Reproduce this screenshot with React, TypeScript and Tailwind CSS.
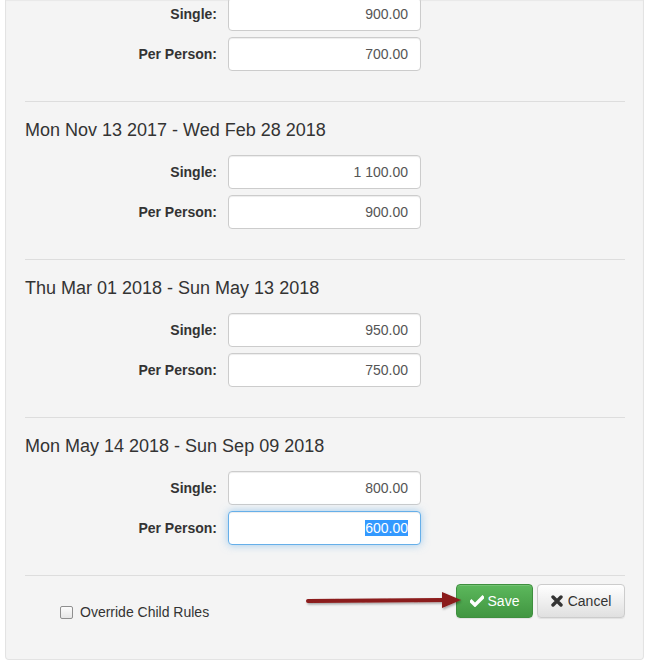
import React from "react";

const font = { fontFamily: '"Liberation Sans", Arial, Helvetica, sans-serif' };

function Field({ label, value, focused }: { label: string; value: string; focused?: boolean }) {
  return (
    <div className="flex items-center">
      <div className="w-[192px] text-right text-[14px] font-bold text-[#333]">{label}</div>
      <div
        className={
          "ml-[11px] h-[34px] w-[193px] rounded-[4px] border bg-white px-[12px] text-right text-[14px] leading-[32px] text-[#555] " +
          (focused
            ? "border-[#66afe9] shadow-[inset_0_1px_1px_rgba(0,0,0,0.075),0_0_8px_rgba(102,175,233,0.6)]"
            : "border-[#ccc] shadow-[inset_0_1px_1px_rgba(0,0,0,0.075)]")
        }
      >
        {focused ? <span className="bg-[#3399ff] text-white">{value}</span> : value}
      </div>
    </div>
  );
}

function Section({ title, single, person, focused }: { title: string; single: string; person: string; focused?: boolean }) {
  return (
    <div className="border-t border-[#dddddd]">
      <div className="pb-[15px] pt-[18px] text-[18px] leading-[20px] text-[#333]">{title}</div>
      <div className="flex flex-col gap-[6px]">
        <Field label="Single:" value={single} />
        <Field label="Per Person:" value={person} focused={focused} />
      </div>
      <div className="h-[30px]" />
    </div>
  );
}

export default function App() {
  return (
    <div className="min-h-[665px] bg-white" style={font}>
      <div className="ml-[5px] w-[639px] overflow-hidden rounded-b-[4px] border border-t-0 border-[#e3e3e3] bg-[#f4f4f4] pb-[37px] pl-[19px] pr-[18px] shadow-[inset_0_1px_1px_rgba(0,0,0,0.05),0_1px_0_rgba(255,255,255,0.1)]">
        <div className="-mt-[3px]">
          <div className="flex flex-col gap-[6px]">
            <Field label="Single:" value="900.00" />
            <Field label="Per Person:" value="700.00" />
          </div>
          <div className="h-[30px]" />
        </div>
        <Section title="Mon Nov 13 2017 - Wed Feb 28 2018" single="1 100.00" person="900.00" />
        <Section title="Thu Mar 01 2018 - Sun May 13 2018" single="950.00" person="750.00" />
        <Section title="Mon May 14 2018 - Sun Sep 09 2018" single="800.00" person="600.00" focused />
        <div className="relative flex items-start justify-between border-t border-[#dddddd] pt-[8px]">
          <label className="ml-[35px] mt-[18px] flex items-center gap-[7px] text-[14px] leading-[20px] text-[#333]">
            <span className="inline-block h-[13px] w-[13px] rounded-[2px] border border-[#8f8f8f] bg-gradient-to-b from-[#fcfcfc] to-[#e6e6e6]" />
            <span>Override Child Rules</span>
          </label>
          <div className="flex gap-[4px]">
            <button className="flex h-[34px] w-[77px] items-center justify-center gap-[4px] rounded-[4px] border border-[#3e8f3e] bg-gradient-to-b from-[#5cb85c] to-[#419641] text-[14px] text-white shadow-[inset_0_1px_0_rgba(255,255,255,0.15),0_1px_1px_rgba(0,0,0,0.075)]">
              <svg width="14" height="12" viewBox="0 0 14 12">
                <path d="M1.5 6.5 L5 10 L12.5 2.5" fill="none" stroke="white" strokeWidth="3.4" strokeLinecap="square" />
              </svg>
              <span>Save</span>
            </button>
            <button className="flex h-[34px] w-[88px] items-center justify-center gap-[5px] rounded-[4px] border border-[#ccc] bg-gradient-to-b from-white to-[#e0e0e0] text-[14px] text-[#333] shadow-[inset_0_1px_0_rgba(255,255,255,0.15),0_1px_1px_rgba(0,0,0,0.075)]">
              <svg width="12" height="12" viewBox="0 0 12 12">
                <path d="M2 2 L10 10 M10 2 L2 10" fill="none" stroke="#333" strokeWidth="3.4" strokeLinecap="round" />
              </svg>
              <span>Cancel</span>
            </button>
          </div>
          <svg className="absolute left-[280px] top-[14px]" width="160" height="22" viewBox="0 0 160 22">
            <defs>
              <filter id="sh" x="-10%" y="-50%" width="120%" height="200%">
                <feDropShadow dx="1" dy="1.5" stdDeviation="1" floodColor="#000" floodOpacity="0.35" />
              </filter>
            </defs>
            <g filter="url(#sh)">
              <path d="M3 11 L140 10" stroke="#8b1a1a" strokeWidth="4" strokeLinecap="round" />
              <path d="M137 2 L156 10 L137 18 Z" fill="#8b1a1a" />
            </g>
          </svg>
        </div>
      </div>
    </div>
  );
}
